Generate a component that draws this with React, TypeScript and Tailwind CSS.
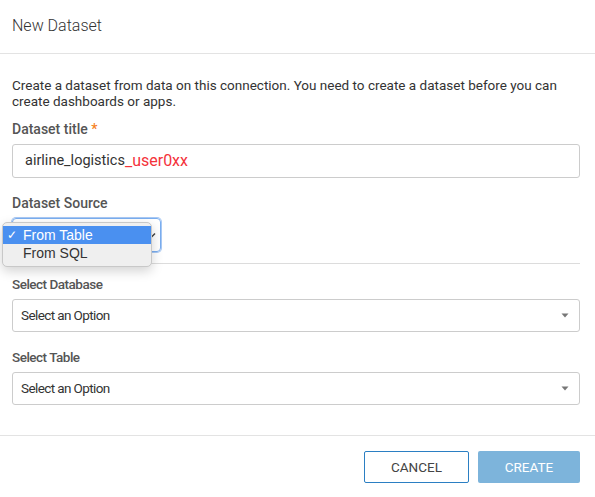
const Caret = () => (
  <svg width="8" height="5" viewBox="0 0 8 5" className="shrink-0">
    <path d="M0.5 0.5 L7.5 0.5 L4 4.5 Z" fill="#777" />
  </svg>
);

const SelectBox = ({ label }: { label: string }) => (
  <div className="flex flex-col">
    <div className="text-[13.5px] leading-[16px] font-medium text-[#555] tracking-[-0.5px]">{label}</div>
    <div className="mt-[7px] h-[33px] border border-[#ccc] rounded-[3px] flex items-center justify-between pl-[8px] pr-[10px]">
      <span className="text-[13.5px] tracking-[-0.6px] text-[#333]">Select an Option</span>
      <Caret />
    </div>
  </div>
);

export default function App() {
  return (
    <div
      className="w-[595px] h-[497px] bg-white flex flex-col text-[#333]"
      style={{ fontFamily: "Roboto, 'Liberation Sans', sans-serif" }}
    >
      <div className="h-[54px] shrink-0 border-b border-[#e3e3e3] flex items-center px-3">
        <span className="text-[16px] font-light text-[#333] mt-[-2px]">New Dataset</span>
      </div>

      <div className="px-3 pt-[23px] pb-[30px] flex flex-col border-b border-[#e3e3e3] pr-[15px]">
        <p className="text-[13.5px] leading-[16px] text-[#333]">
          Create a dataset from data on this connection. You need to create a dataset before you can create dashboards or apps.
        </p>

        <div className="mt-[12px] text-[14px] leading-[16px] font-medium text-[#555]">
          Dataset title <span className="text-[#f5821f]">*</span>
        </div>
        <div className="mt-[7px] h-[34px] border border-[#ccc] rounded-[3px] flex items-center pl-[12px]">
          <span className="text-[14.5px] text-[#333]">airline_logistics</span>
          <span className="text-[16px] text-[#f4333b]">_user0xx</span>
        </div>

        <div className="mt-[17px] text-[14px] leading-[16px] font-medium text-[#555]">Dataset Source</div>
        <div className="relative mt-[7px]">
          <div className="w-[149px] h-[34px] border border-[#7aaef0] rounded-[4px] shadow-[0_0_0_1px_#a9c9f4] flex items-center justify-end pr-[4px]">
            <svg width="8" height="6" viewBox="0 0 8 6">
              <path d="M1 1.5 L4 4.5 L7 1.5" fill="none" stroke="#444" strokeWidth="1.5" />
            </svg>
          </div>
          <div
            className="absolute left-[-10px] top-[4px] w-[150px] rounded-[5px] border border-[#c8c8c8] bg-[#efefef] shadow-[0_4px_12px_rgba(0,0,0,0.18)] py-[3px] text-[14px]"
            style={{ fontFamily: "'Liberation Sans', Arial, sans-serif" }}
          >
            <div className="h-[18px] bg-[#4a90f0] text-white flex items-center">
              <span className="w-[20px] pl-[4px] text-[12px]">✓</span>
              <span>From Table</span>
            </div>
            <div className="h-[19px] text-[#333] flex items-center">
              <span className="w-[20px]" />
              <span>From SQL</span>
            </div>
          </div>
        </div>

        <div className="mt-[11px] border-t border-[#dcdcdc]" />

        <div className="mt-[12px] flex flex-col gap-[17px]">
          <SelectBox label="Select Database" />
          <SelectBox label="Select Table" />
        </div>
      </div>

      <div className="flex justify-end gap-[9px] pt-[15px] pr-[15px]">
        <button className="w-[105px] h-[32px] border border-[#2b7fc3] rounded-[2px] text-[13.5px] text-[#444] bg-white">
          CANCEL
        </button>
        <button className="w-[102px] h-[32px] rounded-[2px] text-[13.5px] text-white bg-[#7db4db]">
          CREATE
        </button>
      </div>
    </div>
  );
}
